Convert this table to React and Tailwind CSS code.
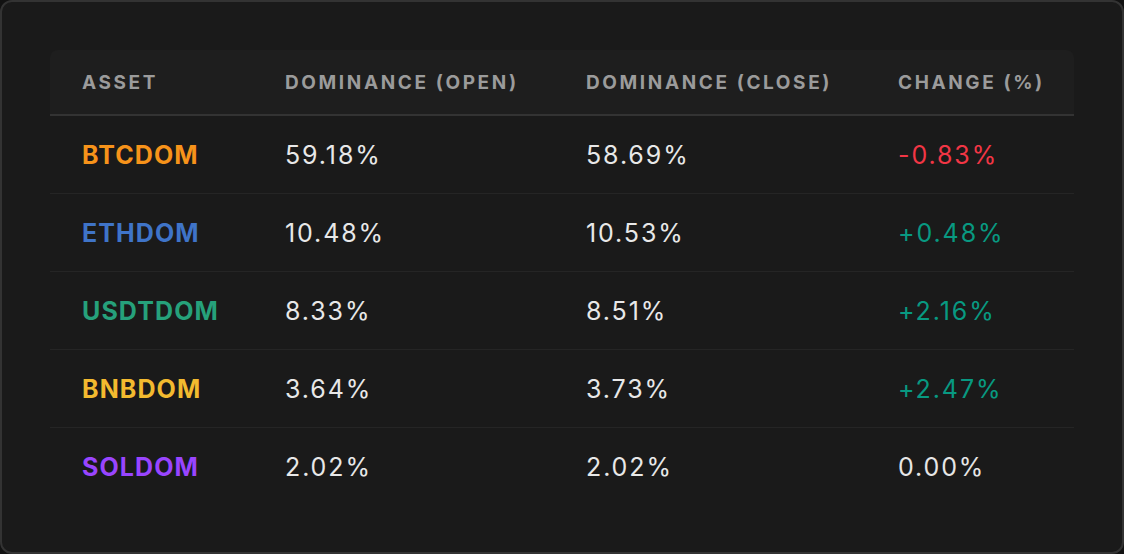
import React from "react";

const rows = [
  { asset: "BTCDOM", color: "text-[#f7931a]", open: "59.18%", close: "58.69%", change: "-0.83%", cc: "text-[#f23645]" },
  { asset: "ETHDOM", color: "text-[#3f74c8]", open: "10.48%", close: "10.53%", change: "+0.48%", cc: "text-[#089981]" },
  { asset: "USDTDOM", color: "text-[#26a17b]", open: "8.33%", close: "8.51%", change: "+2.16%", cc: "text-[#089981]" },
  { asset: "BNBDOM", color: "text-[#f3ba2f]", open: "3.64%", close: "3.73%", change: "+2.47%", cc: "text-[#089981]" },
  { asset: "SOLDOM", color: "text-[#9945ff]", open: "2.02%", close: "2.02%", change: "0.00%", cc: "text-[#e6e6e6]" },
];

export default function App() {
  return (
    <div className="w-[1124px] h-[554px] bg-[#121212] font-['Inter','Noto_Sans',sans-serif]">
      <div className="w-full h-full rounded-[12px] border-2 border-[#333333] bg-[#1a1a1a] px-[48px] pt-[48px]">
        <div className="w-[1024px]">
          <div className="grid grid-cols-[203px_301px_312px_1fr] h-[66px] pt-[3px] items-center bg-[#1e1e1e] rounded-t-[8px] border-b-2 border-[#333333] text-[19px] font-bold tracking-[2.6px] text-[#9b9b9b]">
            <div className="pl-[32px]">ASSET</div>
            <div className="pl-[32px]">DOMINANCE (OPEN)</div>
            <div className="pl-[32px]">DOMINANCE (CLOSE)</div>
            <div className="pl-[32px]">CHANGE (%)</div>
          </div>
          {rows.map((r, i) => (
            <div
              key={r.asset}
              className={
                "grid grid-cols-[203px_301px_312px_1fr] h-[78px] pt-[2px] items-center text-[25px] tracking-[1.9px] " +
                (i < rows.length - 1 ? "border-b border-[#252525]" : "")
              }
            >
              <div className={"pl-[32px] font-bold tracking-[1.1px] " + r.color}>{r.asset}</div>
              <div className="pl-[32px] text-[#e8e8e8]">{r.open}</div>
              <div className="pl-[32px] text-[#e8e8e8]">{r.close}</div>
              <div className={"pl-[32px] " + r.cc}>{r.change}</div>
            </div>
          ))}
        </div>
      </div>
    </div>
  );
}
